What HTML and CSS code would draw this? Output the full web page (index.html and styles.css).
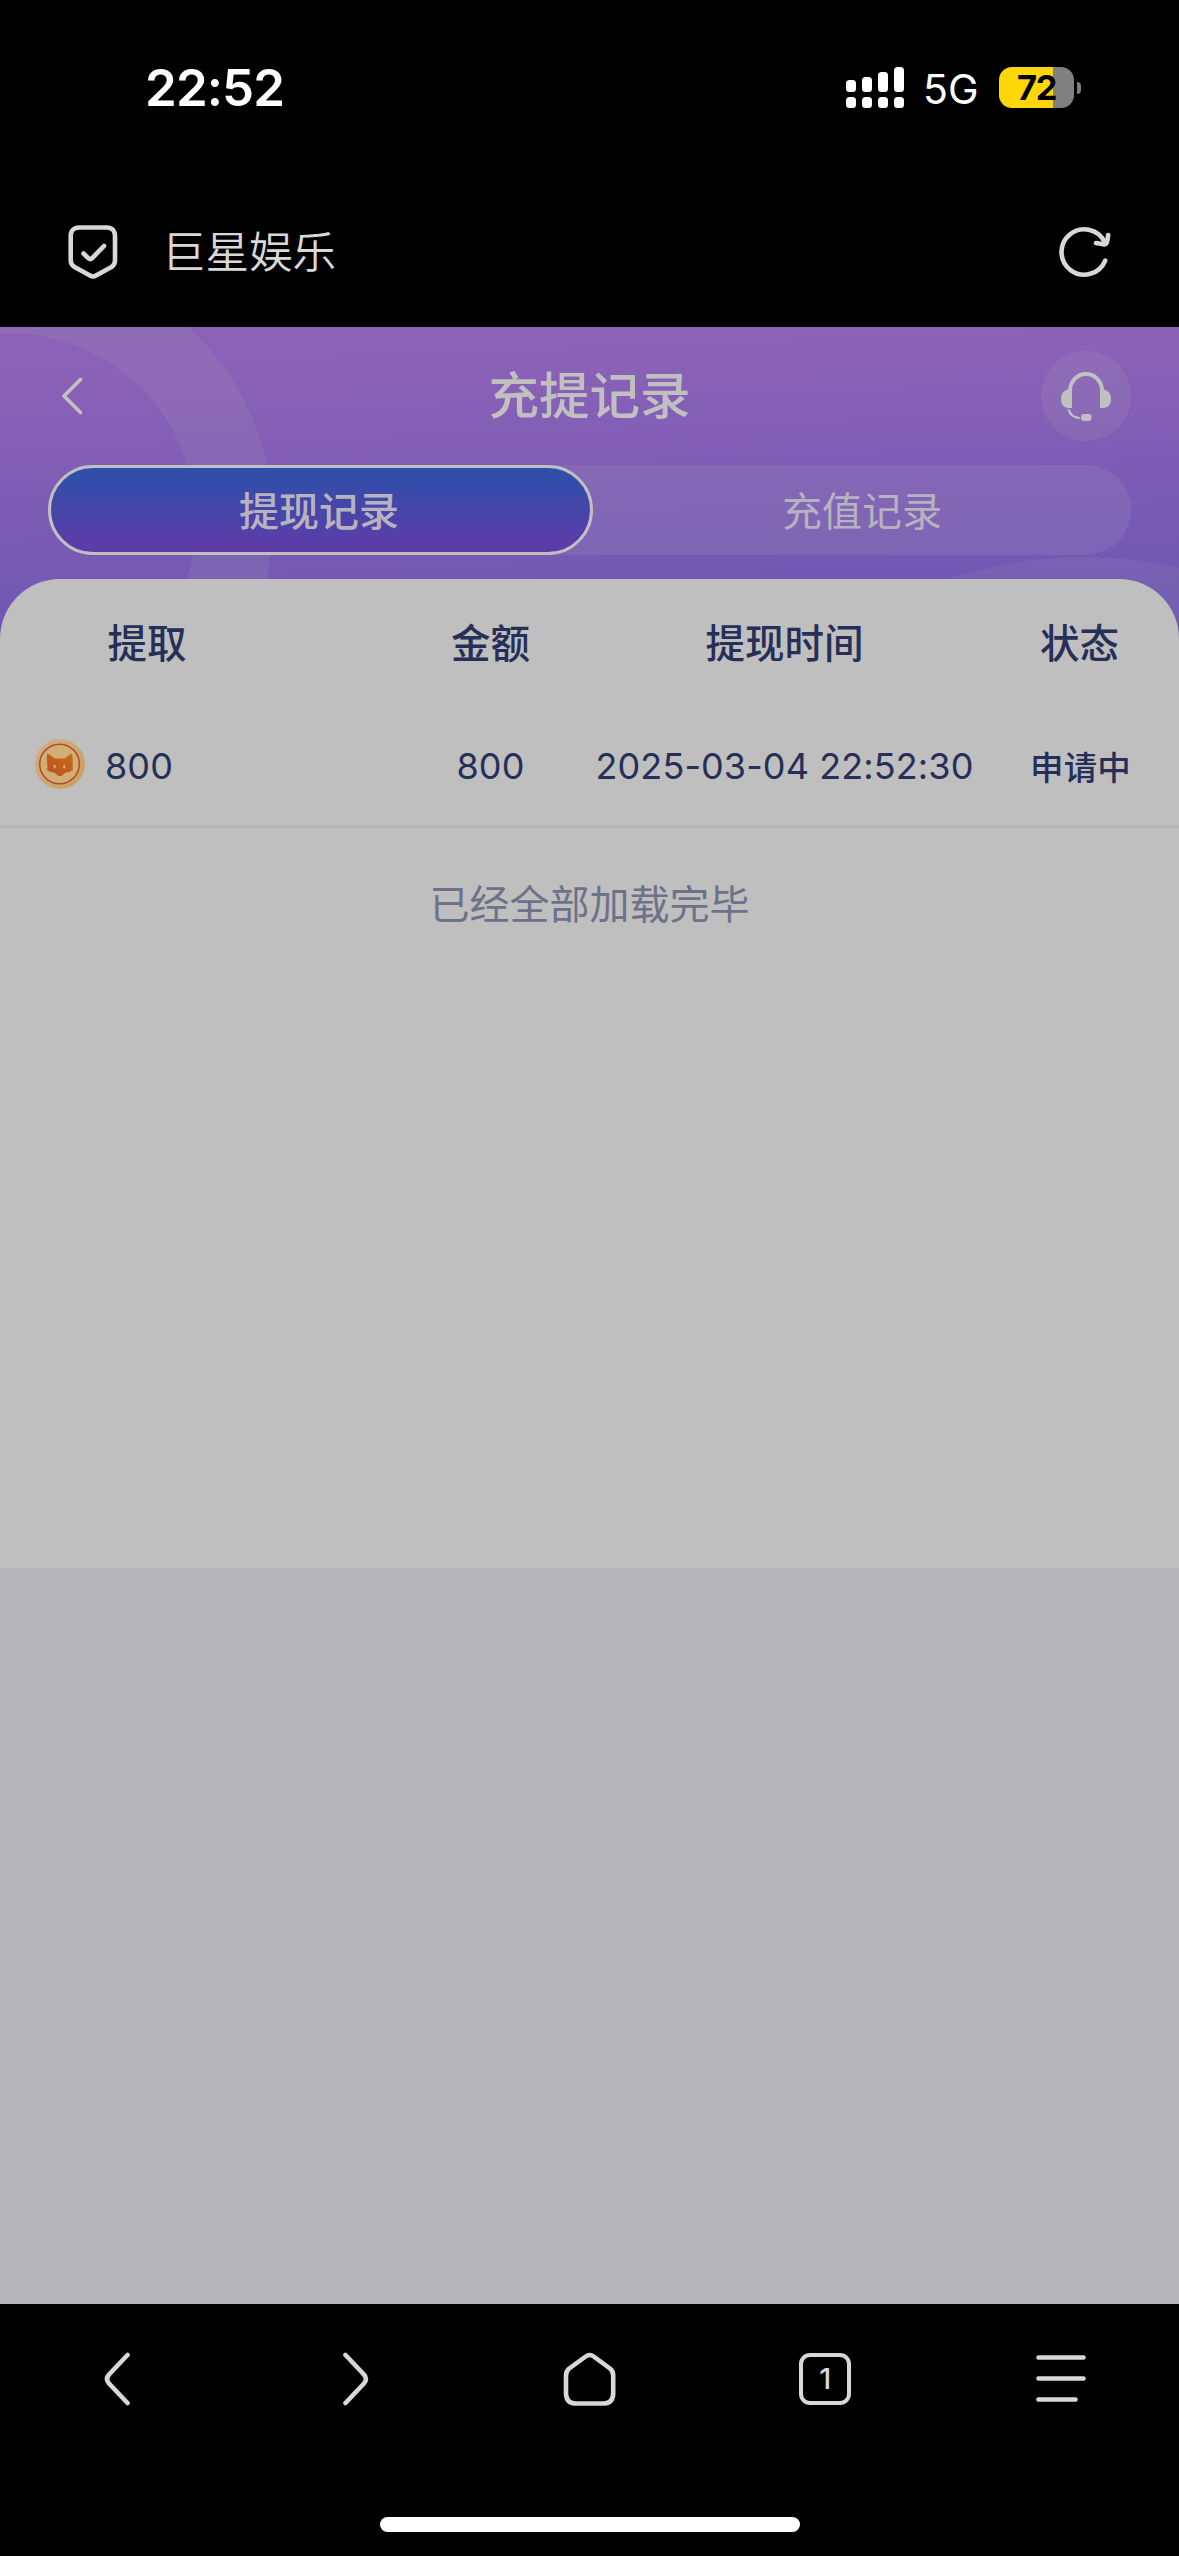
FILE: index.html
```
<!DOCTYPE html>
<html lang="zh-CN">
<head>
  <meta charset="UTF-8" />
  <meta name="viewport" content="width=device-width, initial-scale=1" />
  <title>充提记录</title>
  <link rel="stylesheet" href="styles.css">
</head>
<body>
  <div class="status-bar">
    <span class="clock">22:52</span>
    <div class="status-right">
      <svg class="signal" width="58" height="41" viewBox="0 0 58 41" fill="#fff">
        <rect x="0" y="13" width="10" height="12" rx="3.5" />
        <rect x="16" y="10" width="10" height="15" rx="3.5" />
        <rect x="32" y="5" width="10" height="20" rx="3.5" />
        <rect x="48" y="0" width="10" height="25" rx="3.5" />
        <rect x="0" y="30" width="10" height="11" rx="3.5" />
        <rect x="16" y="30" width="10" height="11" rx="3.5" />
        <rect x="32" y="30" width="10" height="11" rx="3.5" />
        <rect x="48" y="30" width="10" height="11" rx="3.5" />
      </svg>
      <span class="network">5G</span>
      <div class="battery">72</div>
      <span class="battery-tip"></span>
    </div>
  </div>

  <div class="browser-bar">
    <svg class="shield" width="50" height="54" viewBox="0 0 50 54" fill="none" stroke="#d8d8d8" stroke-width="4.6" stroke-linecap="round" stroke-linejoin="round">
      <path d="M11 2.5h28c5 0 8 3.500 8 8.500v24.500c0 3-1.200 5-3.500 6.500L28 50.500c-2 1.300-4 1.300-6 0L6.500 42c-2.300-1.500-3.800-3.500-3.800-6.500V11c0-5 3.300-8.500 8.300-8.500z" />
      <path d="M15.500 28.500l5 4.800c1.200 1 2.400 1 3.500 0L36 21" />
    </svg>
    <span class="site-name">巨星娱乐</span>
    <svg class="refresh" width="52" height="52" viewBox="0 0 52 52" fill="none" stroke="#d8d8d8" stroke-width="4.600" stroke-linecap="round" stroke-linejoin="round">
      <path d="M46.200 34.600A22.700 22.700 0 1 1 45.500 15.800" />
      <path d="M49.200 9l-1.200 7c-.5 1.800-1.800 2.600-3.600 2.200l-7.400-1.200" />
    </svg>
  </div>

  <main>
    <header>
      <svg class="rings" width="1179" height="320" viewBox="0 0 1179 320">
        <circle cx="8" cy="194" r="226.500" fill="none" stroke="#b4b4b4" stroke-opacity=".13" stroke-width="77" />
        <circle cx="1084" cy="655" r="425" fill="#b4b4b4" fill-opacity=".1" />
      </svg>
      <div class="nav">
        <svg class="back" width="22" height="38" viewBox="0 0 22 38" fill="none" stroke="#c0c0c0" stroke-width="3.600" stroke-linecap="round" stroke-linejoin="round">
          <path d="M19.500 2.500L3 19l16.500 16.500" />
        </svg>
        <h1>充提记录</h1>
        <div class="service">
          <svg width="52" height="50" viewBox="0 0 52 50">
            <path d="M10 20.500V19.500a16 16.500 0 0 1 32 0v1" fill="none" stroke="#c0c0c0" stroke-width="4" />
            <path d="M12 18.500v18.500H8.500C4 37 1 33.500 1 28s3-9 7.500-9.500z" fill="#c0c0c0" />
            <path d="M40 18.500v18.500h3.500C48 37 51 33.500 51 28s-3-9-7.500-9.500z" fill="#c0c0c0" />
            <path d="M8.500 38.500c1.500 5 5 8 11 8.500" fill="none" stroke="#c0c0c0" stroke-width="2.400" />
            <rect x="21" y="43" width="10.500" height="7" rx="3" fill="#c0c0c0" />
          </svg>
        </div>
      </div>
      <div class="tabs">
        <div class="tab active">提现记录</div>
        <div class="tab">充值记录</div>
      </div>
    </header>

    <section class="records">
      <div class="row head">
        <span class="first">提取</span>
        <span>金额</span>
        <span>提现时间</span>
        <span>状态</span>
      </div>
      <div class="row item">
        <div class="coin-cell">
          <svg width="50" height="50" viewBox="0 0 50 50">
            <defs>
              <linearGradient id="rim" x1="0" y1="0" x2="1" y2="1">
                <stop offset="0" stop-color="#d0b183" />
                <stop offset="1" stop-color="#cb9d5c" />
              </linearGradient>
              <linearGradient id="fox" x1="1" y1="0" x2="0" y2="1">
                <stop offset="0" stop-color="#c46c1a" />
                <stop offset="1" stop-color="#bd4f22" />
              </linearGradient>
            </defs>
            <circle cx="25" cy="25" r="25" fill="url(#rim)" />
            <circle cx="24.500" cy="25" r="19.800" fill="#d0ae74" stroke="#ad4c2c" stroke-width="1.500" />
            <path d="M12 14.500c3 1.200 5.500 3 7.500 5h10.500c2-2 4-3.800 7-5 .8 5 1 9.500.5 14.500l.5 2-3.500 2-4 .8-4 3.200h-3l-4-3.200-4-.8-3.500-2 .5-3.500c-.6-4-.6-8-.5-13z" fill="url(#fox)" />
            <ellipse cx="19.700" cy="27.500" rx="1.200" ry="2" fill="#dba76c" />
            <ellipse cx="29.300" cy="27.500" rx="1.200" ry="2" fill="#dba76c" />
          </svg>
          <span class="value">800</span>
        </div>
        <span class="value">800</span>
        <span class="value">2025-03-04 22:52:30</span>
        <span class="value state">申请中</span>
      </div>
      <p class="loaded">已经全部加载完毕</p>
    </section>
  </main>

  <footer>
    <div class="toolbar">
      <svg width="54" height="54" viewBox="0 0 54 54">
        <path d="M36.500 3L18.500 22q-5 5 0 10l18 19" />
      </svg>
      <svg width="54" height="54" viewBox="0 0 54 54">
        <path d="M17.500 3l18 19q5 5 0 10l-18 19" />
      </svg>
      <svg width="54" height="54" viewBox="0 0 54 54">
        <path d="M22.700 4.500q4-3 8 0L47 16.500q3.200 2.500 3.200 7V41q0 10-9 10.500H12Q3 51 3 41V23.500q0-4.500 3.200-7z" />
      </svg>
      <div class="tab-count">1</div>
      <svg width="54" height="54" viewBox="0 0 54 54">
        <path d="M4.500 5.500H49.500M4.500 26.500H49.500M4.500 47.500H41.500" />
      </svg>
    </div>
    <div class="home-indicator"></div>
  </footer>
</body>
</html>
```
FILE: styles.css
```
* {
  box-sizing: border-box;
}
body {
  margin: 0;
  width: 1179px;
  height: 2556px;
  background: #000;
  font-family: Inter, 'Noto Sans CJK SC', sans-serif;
  display: flex;
  flex-direction: column;
  overflow: hidden;
}
svg {
  display: block;
  flex: none;
}

/* system status bar */
.status-bar {
  height: 175px;
  padding: 0 98px 0 145px;
  display: flex;
  justify-content: space-between;
  align-items: center;
  color: #fff;
}
.clock {
  font-size: 51px;
  font-weight: 600;
  letter-spacing: -0.9px;
}
.status-right {
  display: flex;
  align-items: center;
}
.network {
  width: 54px;
  margin: 2px 22px 0 19px;
  font-size: 41px;
  white-space: nowrap;
}
.battery {
  width: 75px;
  height: 41px;
  border-radius: 13px;
  background: linear-gradient(90deg, #ffd60a 54px, #808080 54px);
  color: #000;
  font-size: 34.500px;
  font-weight: 700;
  line-height: 41px;
  text-align: center;
  letter-spacing: -1.500px;
}
.battery-tip {
  width: 4px;
  height: 12px;
  margin-left: 3px;
  border-radius: 0 4px 4px 0;
  background: #808080;
}

/* browser address bar */
.browser-bar {
  height: 152px;
  padding: 1px 68px 0 68px;
  display: flex;
  align-items: center;
  color: #d8d8d8;
}
.site-name {
  flex: 1;
  margin: -4px 0 0 44px;
  font-size: 43.500px;
  font-weight: 350;
}

/* page */
main {
  height: 1977px;
  background: #b7b6bb;
}
header {
  position: relative;
  height: 320px;
  padding: 24px 48px 0;
  background: linear-gradient(178deg, #8b62b8 0%, #8961b7 18%, #6a55b2 100%);
  overflow: hidden;
}
.rings {
  position: absolute;
  left: 0;
  top: 0;
}
.nav {
  position: relative;
  height: 90px;
  padding-left: 13px;
  display: flex;
  align-items: center;
  justify-content: space-between;
}
h1 {
  margin: 0 0 0 55px;
  font-size: 50.500px;
  font-weight: 500;
  color: #c0c0c0;
  line-height: 90px;
}
.service {
  width: 90px;
  height: 90px;
  border-radius: 50%;
  background: rgba(190, 190, 190, 0.12);
  display: flex;
  align-items: center;
  justify-content: center;
}
.tabs {
  position: relative;
  height: 90px;
  margin-top: 24px;
  border-radius: 45px;
  background: rgba(190, 190, 190, 0.12);
  display: flex;
}
.tab {
  flex: 1;
  padding-bottom: 2px;
  display: flex;
  align-items: center;
  justify-content: center;
  font-size: 40px;
  color: #b7b3be;
}
.tab.active {
  flex: none;
  width: 545px;
  padding-right: 3px;
  border: 3px solid #c0c0c0;
  border-radius: 45px;
  background: linear-gradient(#2c50aa, #603ba8);
  font-weight: 500;
}

/* records list */
.records {
  position: relative;
  height: 989px;
  margin-top: -68px;
  border-radius: 60px 60px 0 0;
  background: #bfbfbf;
  color: #262f57;
}
.row {
  display: grid;
  grid-template-columns: 392px 197px 391px 199px;
  align-items: center;
  text-align: center;
}
.head {
  height: 129px;
  padding-bottom: 6px;
  font-size: 39.500px;
  font-weight: 500;
}
.head .first {
  padding-right: 98px;
}
.item {
  height: 120px;
  padding-bottom: 6px;
  border-bottom: 3px solid #b6b6b7;
  font-size: 36px;
}
.value {
  padding-top: 4px;
  letter-spacing: 0.1px;
}
.coin-cell {
  padding-left: 35px;
  display: flex;
  align-items: center;
  gap: 20px;
}
.state {
  padding: 3px 0 0 2px;
  font-size: 33.500px;
  font-weight: 500;
}
.loaded {
  margin: 47px 0 0;
  font-size: 40px;
  line-height: 60px;
  text-align: center;
  color: #6d7289;
}

/* browser toolbar */
footer {
  height: 252px;
}
.toolbar {
  height: 150px;
  padding: 0 91px 0 91px;
  display: flex;
  align-items: center;
  justify-content: space-between;
}
.toolbar svg {
  fill: none;
  stroke: #d8d8d8;
  stroke-width: 4.600;
  stroke-linecap: round;
  stroke-linejoin: round;
}
.toolbar svg:nth-child(3) {
  margin-left: -2px;
}
.tab-count {
  width: 52px;
  height: 52px;
  border: 4.600px solid #d8d8d8;
  border-radius: 11px;
  color: #d8d8d8;
  font-size: 29px;
  font-weight: 500;
  line-height: 43px;
  text-align: center;
}
.home-indicator {
  width: 420px;
  height: 15px;
  margin: 63px auto 0;
  border-radius: 8px;
  background: #fff;
}
```
